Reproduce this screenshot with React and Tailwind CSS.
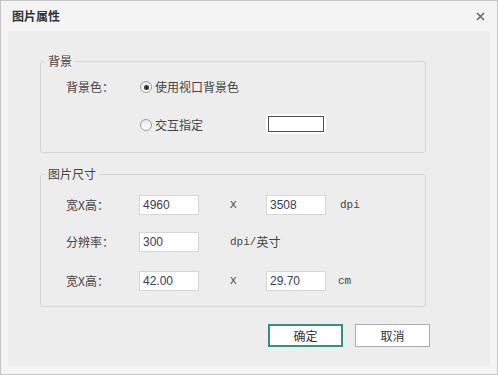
import React from "react";

const cjk = { fontFamily: '"Noto Sans CJK SC", "Noto Sans", sans-serif' };
const mono = { fontFamily: '"Liberation Mono", "DejaVu Sans Mono", monospace' };
const num = { fontFamily: '"Liberation Sans", Arial, sans-serif' };

function Radio({ checked }) {
  return (
    <span className="w-[12px] h-[12px] rounded-full border border-[#9c9c9c] bg-gradient-to-b from-[#e8e8e8] to-white flex items-center justify-center shrink-0">
      {checked && <span className="w-[5px] h-[5px] rounded-full bg-[#333]" />}
    </span>
  );
}

function Input({ value }) {
  return (
    <div
      className="w-[60px] h-[20px] bg-white border border-[#d6d6d6] flex items-center pl-[3px] text-[12px] text-[#3a3a5a] shrink-0"
      style={num}
    >
      {value}
    </div>
  );
}

function Label({ children }) {
  return (
    <div className="w-[73px] text-[12px] text-[#444] shrink-0 leading-[20px]" style={cjk}>
      {children}
    </div>
  );
}

export default function App() {
  return (
    <div className="w-[498px] h-[375px] border border-[#c6c6c6] bg-[#f4f4f4] flex flex-col" style={cjk}>
      <div className="h-[30px] shrink-0 flex items-center justify-between pl-[11px] pr-[11px]">
        <span className="text-[12px] font-bold text-[#333]">图片属性</span>
        <svg width="9" height="9" viewBox="0 0 9 9" className="mr-[1px]">
          <path d="M1 1 L8 8 M8 1 L1 8" stroke="#6a6a6a" strokeWidth="1.6" />
        </svg>
      </div>
      <div className="flex-1 mx-[7px] mb-[8px] bg-[#ededed] pl-[32px] pt-[22px] flex flex-col">
        <fieldset className="w-[386px] border border-[#d4d4d4] rounded-[3px] pb-[17px]">
          <legend className="ml-[4px] px-[3px] text-[12px] leading-[16px] text-[#444]">背景</legend>
          <div className="flex items-center h-[20px] mt-[8px] pl-[25px]">
            <Label>背景色：</Label>
            <div className="flex items-center gap-[3px] ml-[1px]">
              <Radio checked />
              <span className="text-[12px] text-[#444]">使用视口背景色</span>
            </div>
          </div>
          <div className="flex items-center h-[20px] mt-[18px] pl-[25px]">
            <div className="w-[73px] shrink-0" />
            <div className="flex items-center gap-[3px] ml-[1px] w-[126px]">
              <Radio />
              <span className="text-[12px] text-[#444]">交互指定</span>
            </div>
            <div className="w-[60px] h-[20px] bg-white p-[2px] -mt-[2px]">
              <div className="w-full h-full border border-[#505050]" />
            </div>
          </div>
        </fieldset>

        <fieldset className="w-[386px] border border-[#d4d4d4] rounded-[3px] pb-[15px] mt-[13px]">
          <legend className="ml-[4px] px-[3px] text-[12px] leading-[16px] text-[#444]">图片尺寸</legend>
          <div className="flex items-center h-[20px] mt-[13px] pl-[25px]">
            <Label>宽X高：</Label>
            <Input value="4960" />
            <span className="ml-[31px] w-[36px] text-[11px] text-[#444]" style={mono}>X</span>
            <Input value="3508" />
            <span className="ml-[14px] text-[11px] text-[#444]" style={mono}>dpi</span>
          </div>
          <div className="flex items-center h-[20px] mt-[17px] pl-[25px]">
            <Label>分辨率：</Label>
            <Input value="300" />
            <span className="ml-[31px] text-[12px] text-[#444] flex items-center">
              <span className="text-[11px]" style={mono}>dpi/</span>
              <span>英寸</span>
            </span>
          </div>
          <div className="flex items-center h-[20px] mt-[19px] pl-[25px]">
            <Label>宽X高：</Label>
            <Input value="42.00" />
            <span className="ml-[31px] w-[36px] text-[11px] text-[#444]" style={mono}>X</span>
            <Input value="29.70" />
            <span className="ml-[12px] text-[11px] text-[#444]" style={mono}>cm</span>
          </div>
        </fieldset>

        <div className="flex mt-[17px] pl-[228px] gap-[12px]">
          <button className="w-[75px] h-[23px] bg-white border-2 border-[#348f80] text-[12px] text-[#333] flex items-center justify-center">
            确定
          </button>
          <button className="w-[75px] h-[23px] bg-white border border-[#adadad] text-[12px] text-[#333] flex items-center justify-center">
            取消
          </button>
        </div>
      </div>
    </div>
  );
}
